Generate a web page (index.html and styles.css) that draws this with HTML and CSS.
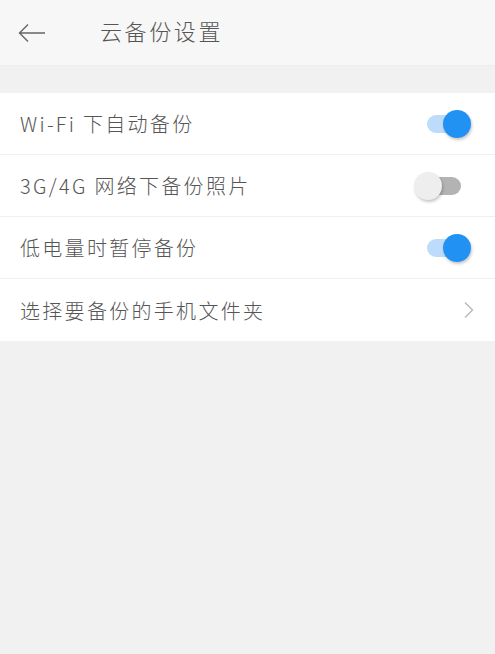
FILE: index.html
```html
<!DOCTYPE html>
<html lang="zh-CN">

<head>
  <meta charset="UTF-8">
  <meta name="viewport" content="width=device-width, initial-scale=1.0">
  <title>云备份设置</title>
  <link rel="stylesheet" href="styles.css">
</head>

<body>
  <header class="top-bar">
    <button class="back-button" aria-label="返回">
      <svg width="30" height="20" viewBox="0 0 30 20">
        <path d="M28 10H2.5M11 1.5L2.5 10L11 18.5" fill="none" stroke="#666" stroke-width="1.4" />
      </svg>
    </button>
    <h1 class="title">云备份设置</h1>
  </header>

  <ul class="settings-list">
    <li class="settings-item">
      <span class="item-label">Wi-Fi 下自动备份</span>
      <span class="switch on"><span class="switch-thumb"></span></span>
    </li>
    <li class="settings-item">
      <span class="item-label">3G/4G 网络下备份照片</span>
      <span class="switch"><span class="switch-thumb"></span></span>
    </li>
    <li class="settings-item">
      <span class="item-label">低电量时暂停备份</span>
      <span class="switch on"><span class="switch-thumb"></span></span>
    </li>
    <li class="settings-item">
      <span class="item-label">选择要备份的手机文件夹</span>
      <svg class="chevron" width="12" height="18" viewBox="0 0 12 18">
        <path d="M2 1.5L9.5 9L2 16.5" fill="none" stroke="#bbb" stroke-width="1.5" />
      </svg>
    </li>
  </ul>
</body>

</html>
```

FILE: styles.css
```css
body {
  margin: 0;
  min-height: 100vh;
  background-color: #f1f1f1;
  font-family: "Noto Sans CJK SC", "Noto Sans", sans-serif;
  color: #555;
}

.top-bar {
  display: flex;
  align-items: center;
  height: 65px;
  background-color: #f7f7f7;
  border-bottom: 1px solid #ececec;
}

.back-button {
  display: flex;
  align-items: center;
  padding: 0;
  margin-left: 17px;
  background: transparent;
  border: none;
  cursor: pointer;
}

.title {
  margin: 0 0 0 53px;
  padding-bottom: 6px;
  font-size: 22px;
  font-weight: 300;
  letter-spacing: 2.6px;
  color: #555;
}

.settings-list {
  list-style: none;
  margin: 27px 0 0;
  padding: 0;
  background-color: #ffffff;
}

.settings-item {
  display: flex;
  align-items: center;
  justify-content: space-between;
  height: 61px;
  padding: 0 20px;
  border-bottom: 1px solid #f0f0f0;
}

.settings-item:last-child {
  border-bottom: none;
  height: 62px;
}

.item-label {
  font-size: 20px;
  font-weight: 300;
  letter-spacing: 2.3px;
}

.switch {
  position: relative;
  width: 34px;
  height: 18px;
  margin-right: 14px;
  border-radius: 9px;
  background-color: #b3b3b3;
}

.switch-thumb {
  position: absolute;
  top: -5px;
  left: -13px;
  width: 28px;
  height: 28px;
  border-radius: 50%;
  background-color: #eeeeee;
  box-shadow: 1px 2px 3px rgba(0, 0, 0, 0.22);
}

.switch.on {
  background-color: #bddcfb;
}

.switch.on .switch-thumb {
  left: auto;
  right: -10px;
  background-color: #2291f4;
}
```
